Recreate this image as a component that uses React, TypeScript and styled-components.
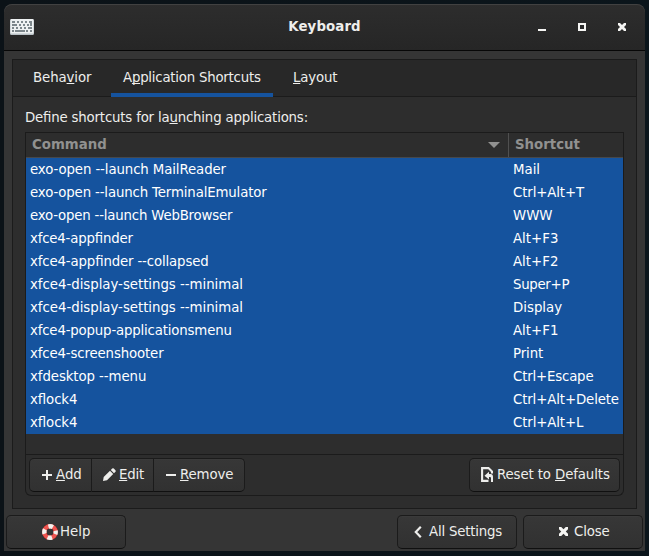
import React from "react";
import styled, { createGlobalStyle, css } from "styled-components";

const GlobalStyle = createGlobalStyle`
  *, *::before, *::after { box-sizing: border-box; }
  body {
    margin: 0;
    background: #0b1318;
    color: #eeeeec;
    font: 13.333px/16px "DejaVu Sans", sans-serif;
    font-feature-settings: "liga" 1;
    overflow: hidden;
  }
  svg { display: block; flex: none; }
`;

const Desktop = styled.div`
  width: 649px;
  height: 556px;
  padding: 4px 4px 5px 4px;
  background: linear-gradient(90deg, #0b1217, #0b151b);
`;

const Window = styled.main`
  width: 641px;
  height: 547px;
  display: flex;
  flex-direction: column;
  border-radius: 8px 8px 0 0;
  background: #353535;
  overflow: hidden;
`;

const TitleBar = styled.header`
  height: 47px;
  flex: none;
  display: grid;
  grid-template-columns: 120px 1fr 120px;
  align-items: center;
  padding-bottom: 2px;
  border-bottom: 1px solid #070707;
  border-radius: 8px 8px 0 0;
  background: linear-gradient(#2d2d2d, #262626);
  box-shadow: inset 0 1px #414141;
`;

const AppIcon = styled.div`
  padding: 1px 0 0 6px;
`;

const Title = styled.h1`
  margin: 2px 0 0;
  font-size: 13.333px;
  line-height: 16px;
  letter-spacing: 0.1px;
  text-align: center;
`;

const WindowControls = styled.div`
  display: flex;
  gap: 32px;
  padding: 1px 0 0 13px;
`;

const Notebook = styled.section`
  height: 450px;
  margin: 8px 8px 0;
  flex: none;
  border: 1px solid #1b1b1b;
  background: #2d2d2d;
`;

const TabBar = styled.nav`
  display: flex;
  gap: 8px;
  height: 37px;
  padding-left: 8px;
  background: #282828;
  border-bottom: 1px solid #1b1b1b;
`;

const Tab = styled.div<{ $width: number; $tracking?: number; $active?: boolean }>`
  width: ${(p) => p.$width}px;
  height: 37px;
  padding: 10px 0 0 12px;
  letter-spacing: ${(p) => p.$tracking ?? 0}px;
  white-space: nowrap;
  ${(p) => p.$active && css`box-shadow: inset 0 -4px #15539e;`}
`;

const Mnemonic = styled.span`
  text-decoration: underline;
  text-decoration-thickness: 1px;
  text-underline-offset: 1px;
  text-decoration-skip-ink: none;
`;

const Page = styled.div`
  padding: 12px 12px 0;
`;

const Caption = styled.div`
  height: 23px;
  padding-top: 1px;
  letter-spacing: -0.19px;
`;

const Table = styled.div`
  height: 323px;
  border: 1px solid #1b1b1b;
  background: #2d2d2d;
`;

const columns = css`
  display: grid;
  grid-template-columns: 483px 1fr;
`;

const TableHeader = styled.div`
  ${columns}
  height: 25px;
  border-bottom: 1px solid #46484b;
  color: #919190;
  font-weight: bold;
`;

const HeaderCell = styled.div<{ $divider?: boolean }>`
  display: flex;
  align-items: center;
  justify-content: space-between;
  padding: 0 8px 0 6px;
  border-right: ${(p) => (p.$divider ? "1px solid #505050" : "none")};
`;

const Row = styled.div`
  ${columns}
  height: 23px;
  line-height: 23px;
  background: #15539e;
  color: #ffffff;
  white-space: nowrap;
`;

const Cell = styled.div<{ $tracking: number }>`
  padding-left: 4px;
  letter-spacing: ${(p) => p.$tracking}px;
`;

const Toolbar = styled.div`
  display: flex;
  justify-content: space-between;
  height: 41px;
  padding: 3px;
  border: 1px solid #1b1b1b;
  border-top: 0;
  border-radius: 0 0 6px 6px;
`;

const ButtonGroup = styled.div`
  display: flex;
`;

const Button = styled.button<{
  $width: number;
  $indent: number;
  $gap: number;
  $tracking?: number;
  $joined?: "start" | "middle" | "end";
}>`
  width: ${(p) => p.$width}px;
  height: 34px;
  display: flex;
  align-items: center;
  gap: ${(p) => p.$gap}px;
  padding: 0 0 1px ${(p) => p.$indent}px;
  border: 1px solid #1b1b1b;
  border-bottom-color: #101010;
  border-left-width: ${(p) => (p.$joined === "middle" || p.$joined === "end" ? 0 : 1)}px;
  border-radius: ${(p) =>
    p.$joined === "start" ? "5px 0 0 5px" : p.$joined === "middle" ? "0" : p.$joined === "end" ? "0 5px 5px 0" : "5px"};
  background: linear-gradient(#373737, #313131);
  box-shadow: inset 0 1px #3a3a3a;
  color: #eeeeec;
  font: inherit;
  letter-spacing: ${(p) => p.$tracking ?? 0}px;
  white-space: nowrap;
`;

const Footer = styled.footer`
  display: flex;
  gap: 6px;
  padding: 6px 2px 0;
`;

const Spacer = styled.div`
  flex: 1;
`;

// command, its tracking, key combination, its tracking
const shortcuts: [string, number, string, number][] = [
  ["exo-open --launch MailReader", -0.11, "Mail", 0],
  ["exo-open --launch TerminalEmulator", -0.15, "Ctrl+Alt+T", -0.12],
  ["exo-open --launch WebBrowser", -0.2, "WWW", 0],
  ["xfce4-appfinder", -0.2, "Alt+F3", 0],
  ["xfce4-appfinder --collapsed", -0.15, "Alt+F2", 0],
  ["xfce4-display-settings --minimal", -0.03, "Super+P", -0.3],
  ["xfce4-display-settings --minimal", -0.03, "Display", 0],
  ["xfce4-popup-applicationsmenu", -0.18, "Alt+F1", 0],
  ["xfce4-screenshooter", -0.15, "Print", -0.1],
  ["xfdesktop --menu", -0.09, "Ctrl+Escape", -0.18],
  ["xflock4", -0.1, "Ctrl+Alt+Delete", -0.13],
  ["xflock4", -0.1, "Ctrl+Alt+L", -0.12],
];

const KeyboardIcon = () => (
  <svg width="24" height="16" viewBox="0 0 24 16">
    <rect width="24" height="16" rx="1.5" fill="#b9c1c6" />
    <rect x="0.5" width="23" height="14.5" rx="1" fill="#eef1f2" />
    <g fill="#7d878c">
      <path d="M2 2h3v2H2zM7 2h2v2H7zM11 2h2v2h-2zM15 2h2v2h-2zM19 2h3v5h-2V4h-1z" />
      <path d="M2 5h5v2H2zM9 5h2v2H9zM13 5h2v2h-2zM17 5h2v2h-2z" />
      <path d="M2 8h2v2H2zM6 8h2v2H6zM10 8h2v2h-2zM14 8h2v2h-2zM18 8h4v2h-4z" />
      <path d="M2 11h2v2H2zM5 11h10v2H5zM16 11h2v2h-2zM20 11h2v2h-2z" />
    </g>
  </svg>
);

const CrossIcon = ({ size = 8 }: { size?: number }) => (
  <svg width={size} height={size} viewBox="0 0 8 8">
    <path d="M0 0h2l2 2 2-2h2v2L6 4l2 2v2H6L4 6 2 8H0V6l2-2-2-2z" fill="#f5f5f3" />
  </svg>
);

const MinimizeIcon = () => (
  <svg width="8" height="8" viewBox="0 0 8 8">
    <path d="M0 6h8v2H0z" fill="#f5f5f3" />
  </svg>
);

const MaximizeIcon = () => (
  <svg width="8" height="8" viewBox="0 0 8 8">
    <path d="M1 1h6v6H1z" fill="none" stroke="#f5f5f3" strokeWidth="2" />
  </svg>
);

const SortIcon = () => (
  <svg width="12" height="6" viewBox="0 0 12 6">
    <path d="M0 0h12L6 6z" fill="#919190" />
  </svg>
);

const PlusIcon = () => (
  <svg width="10" height="10" viewBox="0 0 10 10">
    <path d="M4 0h2v4h4v2H6v4H4V6H0V4h4z" fill="#eeeeec" />
  </svg>
);

const MinusIcon = () => (
  <svg width="10" height="10" viewBox="0 0 10 10">
    <path d="M0 4h10v2H0z" fill="#eeeeec" />
  </svg>
);

const PencilIcon = () => (
  <svg width="13" height="13" viewBox="0 0 13 13">
    <path d="M0 13l.7-4L7 2.8l3.2 3.2L4 12.2zM7.8 2L9.2.6q.8-.8 1.6 0l1.6 1.6q.8.8 0 1.6L11 5.2z" fill="#eeeeec" />
  </svg>
);

const RevertIcon = () => (
  <svg width="12" height="15" viewBox="0 0 12 15">
    <path d="M7.5 13.9H1.1V1.1h6.4L11 4.6V6.5" fill="none" stroke="#eeeeec" strokeWidth="2.1" />
    <path d="M3.5 8.7L8 4.7V7h1.5Q12 7 12 10v5h-2v-4q0-1-1-1H8v2.5z" fill="#eeeeec" />
  </svg>
);

const BackIcon = () => (
  <svg width="8" height="12" viewBox="0 0 8 12">
    <path d="M6.8.8L1.8 6l5 5.2" fill="none" stroke="#eeeeec" strokeWidth="2.2" />
  </svg>
);

const LifebuoyIcon = () => (
  <svg width="16" height="16" viewBox="0 0 16 16">
    <circle cx="8" cy="8" r="5.7" fill="none" stroke="#b32a28" strokeWidth="4.6" />
    <circle cx="8" cy="8" r="5.7" fill="none" stroke="#ee5550" strokeWidth="3.9" />
    <circle
      cx="8"
      cy="8"
      r="5.7"
      fill="none"
      stroke="#f2f2ee"
      strokeWidth="4.4"
      strokeDasharray="4.6 4.353"
      strokeDashoffset="2.3"
    />
  </svg>
);

export default function App() {
  return (
    <Desktop>
      <GlobalStyle />
      <Window>
        <TitleBar>
          <AppIcon><KeyboardIcon /></AppIcon>
          <Title>Keyboard</Title>
          <WindowControls><MinimizeIcon /><MaximizeIcon /><CrossIcon /></WindowControls>
        </TitleBar>
        <Notebook>
          <TabBar>
            <Tab $width={82} $tracking={-0.1}>Beha<Mnemonic>v</Mnemonic>ior</Tab>
            <Tab $width={162} $tracking={-0.23} $active>A<Mnemonic>p</Mnemonic>plication Shortcuts</Tab>
            <Tab $width={68} $tracking={-0.15}><Mnemonic>L</Mnemonic>ayout</Tab>
          </TabBar>
          <Page>
            <Caption>Define shortcuts for la<Mnemonic>u</Mnemonic>nching applications:</Caption>
            <Table>
              <TableHeader>
                <HeaderCell $divider>Command<SortIcon /></HeaderCell>
                <HeaderCell>Shortcut</HeaderCell>
              </TableHeader>
              {shortcuts.map(([command, commandTracking, keys, keysTracking], i) => (
                <Row key={i}>
                  <Cell $tracking={commandTracking}>{command}</Cell>
                  <Cell $tracking={keysTracking}>{keys}</Cell>
                </Row>
              ))}
            </Table>
            <Toolbar>
              <ButtonGroup>
                <Button $width={63} $indent={12} $gap={4} $joined="start">
                  <PlusIcon /><span><Mnemonic>A</Mnemonic>dd</span>
                </Button>
                <Button $width={62} $indent={11} $gap={3} $tracking={-0.2} $joined="middle">
                  <PencilIcon /><span><Mnemonic>E</Mnemonic>dit</span>
                </Button>
                <Button $width={91} $indent={12} $gap={4} $tracking={-0.15} $joined="end">
                  <MinusIcon /><span><Mnemonic>R</Mnemonic>emove</span>
                </Button>
              </ButtonGroup>
              <Button $width={151} $indent={11} $gap={4} $tracking={-0.12}>
                <RevertIcon /><span>Reset to <Mnemonic>D</Mnemonic>efaults</span>
              </Button>
            </Toolbar>
          </Page>
        </Notebook>
        <Footer>
          <Button $width={120} $indent={35} $gap={2}><LifebuoyIcon />Help</Button>
          <Spacer />
          <Button $width={120} $indent={16} $gap={7} $tracking={-0.2}><BackIcon />All Settings</Button>
          <Button $width={120} $indent={35} $gap={6} $tracking={-0.15}><CrossIcon size={9} />Close</Button>
        </Footer>
      </Window>
    </Desktop>
  );
}
